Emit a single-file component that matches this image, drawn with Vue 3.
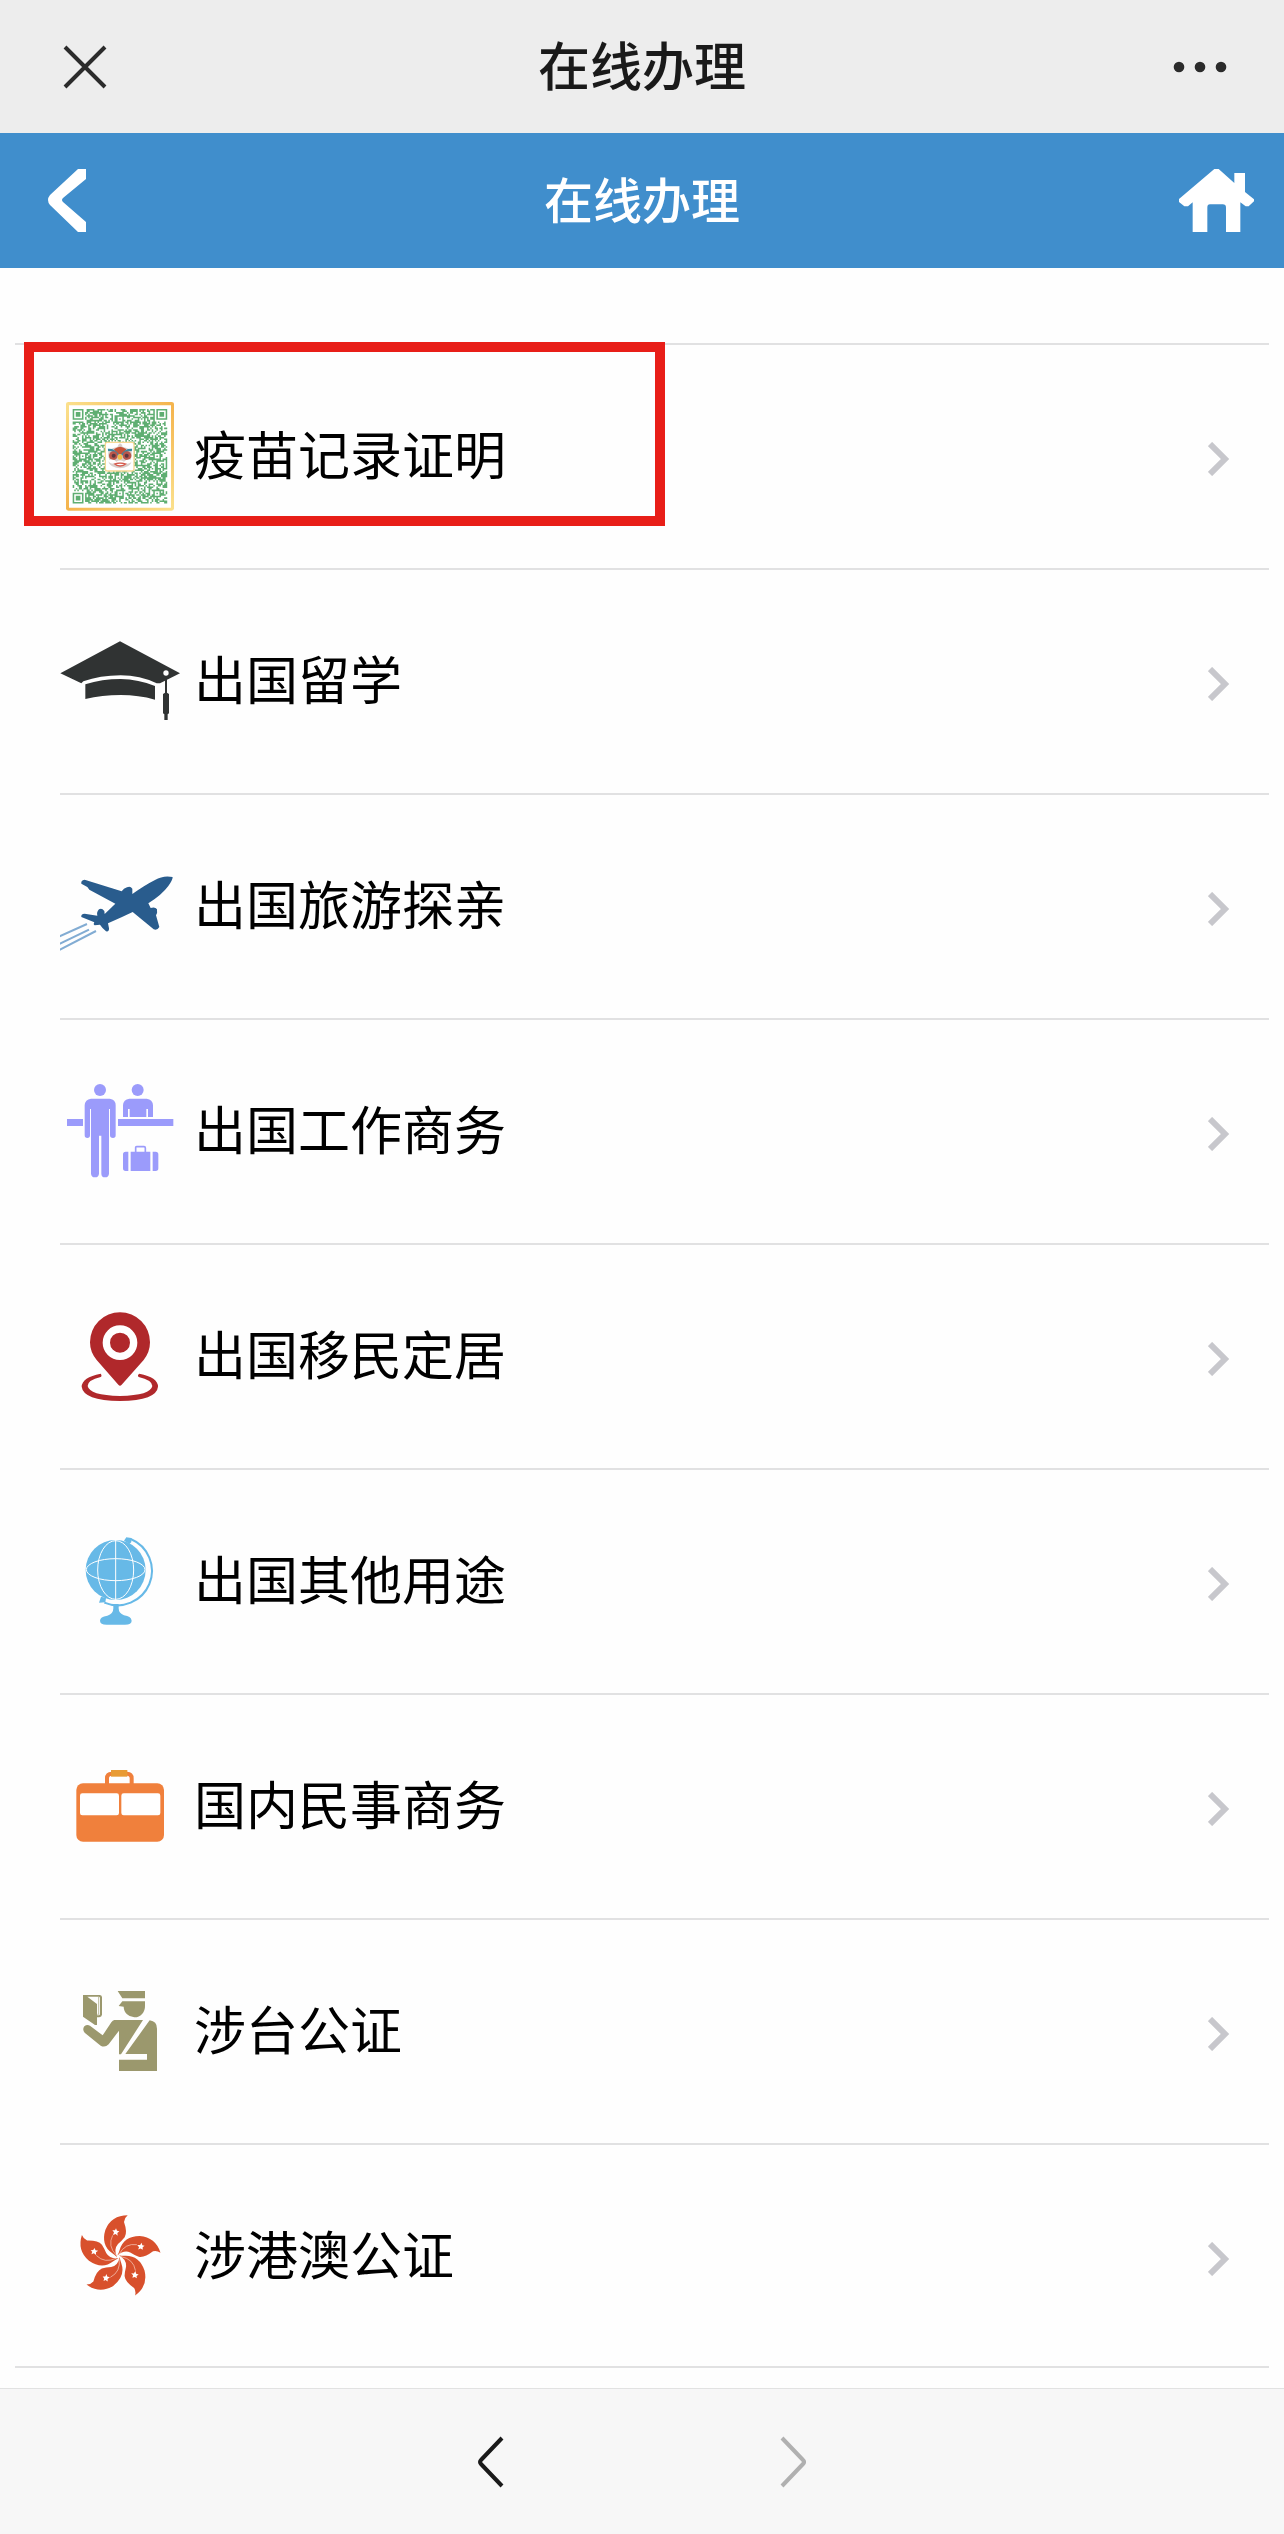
<script setup>
const services = [
  { id: 'vaccine', label: '疫苗记录证明', marked: true },
  { id: 'study', label: '出国留学' },
  { id: 'travel', label: '出国旅游探亲' },
  { id: 'work', label: '出国工作商务' },
  { id: 'settle', label: '出国移民定居' },
  { id: 'other', label: '出国其他用途' },
  { id: 'domestic', label: '国内民事商务' },
  { id: 'taiwan', label: '涉台公证' },
  { id: 'hkmo', label: '涉港澳公证' },
]

// Decorative code pattern: three finder squares and seeded filler modules.
const SIZE = 61
function buildCode() {
  let seed = 20211
  const rnd = () => {
    seed = (seed * 1103515245 + 12345) % 2147483648
    return seed / 2147483648
  }
  const finders = [[0, 0], [SIZE - 7, 0], [0, SIZE - 7]]
  const small = [[SIZE - 9, SIZE - 9], [28, 4], [4, 28], [52, 28], [28, 52]]
  const ring = (x, y, n) => {
    const edge = Math.max(Math.abs(x - n), Math.abs(y - n))
    return edge === n || edge <= n - 2
  }
  let d = ''
  for (let y = 0; y < SIZE; y++) {
    for (let x = 0; x < SIZE; x++) {
      let on = rnd() < 0.58
      for (const [fx, fy] of finders) {
        if (x >= fx - 1 && x <= fx + 7 && y >= fy - 1 && y <= fy + 7) {
          const inside = x >= fx && x < fx + 7 && y >= fy && y < fy + 7
          on = inside && ring(x - fx, y - fy, 3)
        }
      }
      for (const [sx, sy] of small) {
        if (x >= sx && x < sx + 5 && y >= sy && y < sy + 5) on = ring(x - sx, y - sy, 2)
      }
      if (on) d += `M${x} ${y}h1v1h-1z`
    }
  }
  return d
}
const codePath = buildCode()
const petals = [0, 72, 144, 216, 288]
</script>

<template>
  <div class="page">
    <header class="bar app-bar">
      <button type="button" class="icon-btn close" aria-label="关闭">
        <svg width="44" height="44" viewBox="0 0 44 44"><path d="M2 2L42 42M42 2L2 42" fill="none" stroke="#2b2b2b" stroke-width="4" /></svg>
      </button>
      <div class="app-title">在线办理</div>
      <button type="button" class="icon-btn more" aria-label="更多">
        <svg width="54" height="12" viewBox="0 0 54 12" fill="#2b2b2b"><circle cx="6" cy="6" r="5.3" /><circle cx="27" cy="6" r="5.3" /><circle cx="48" cy="6" r="5.3" /></svg>
      </button>
    </header>

    <nav class="bar page-bar">
      <a href="#" class="back" aria-label="返回">
        <svg width="38" height="63" viewBox="0 0 38 63"><path d="M30 0H38V10L15 29Q13 31 15 33L38 53V63H30L2 36Q-2 31 2 26Z" fill="#fff" /></svg>
      </a>
      <h1>在线办理</h1>
      <a href="#" class="home" aria-label="首页">
        <svg width="75" height="63" viewBox="57 87 225 189"><path d="M163 87H176L223 129V99H255V156L282 178V184L266 199H257L241 187V276H198V203Q198 193 188 193H150Q142 193 142 203V276H98V187L84 199H73L57 186V177Z" fill="#fff" /></svg>
      </a>
    </nav>

    <main>
      <ul class="services">
        <li v-for="item in services" :key="item.id">
          <a href="#" class="row">
            <svg class="pic" viewBox="0 0 360 360" aria-hidden="true">
              <g v-if="item.id === 'vaccine'" transform="translate(0 -3)">
                <defs>
                  <linearGradient id="gold" x1="0" y1="0" x2="1" y2="0"><stop offset="0" stop-color="#fbe08c" /><stop offset="1" stop-color="#f4b34c" /></linearGradient>
                  <linearGradient id="gold-side" x1="0" y1="0" x2="0" y2="1"><stop offset="0" stop-color="#fbe08c" /><stop offset="1" stop-color="#f4b34c" /></linearGradient>
                  <linearGradient id="gold-low" x1="0" y1="0" x2="1" y2="0"><stop offset="0" stop-color="#f4b34c" /><stop offset="1" stop-color="#fbe08c" /></linearGradient>
                  <linearGradient id="gold-right" x1="0" y1="0" x2="0" y2="1"><stop offset="0" stop-color="#f4b34c" /><stop offset="1" stop-color="#fbe08c" /></linearGradient>
                </defs>
                <rect x="18" y="21" width="324" height="326" rx="7" fill="#fff" />
                <path d="M18 28Q18 21 25 21H335Q342 21 342 28L333 31H27Z" fill="url(#gold)" />
                <path d="M18 340Q18 347 25 347H335Q342 347 342 340L333 338H27Z" fill="url(#gold-low)" />
                <rect x="18" y="26" width="9" height="316" fill="url(#gold-side)" />
                <rect x="333" y="26" width="9" height="316" fill="url(#gold-right)" />
                <path :d="codePath" transform="translate(38 42) scale(4.65)" fill="#5fae72" />
                <rect x="136" y="142" width="86" height="86" rx="6" fill="#fff" stroke="#f8d894" stroke-width="4" />
                <path d="M146 168Q158 157 172 157L175 149L180 145L186 149L188 157Q202 157 214 168Q218 182 212 192Q219 205 203 214Q180 226 157 214Q141 205 148 192Q142 182 146 168Z" fill="#d9cfcb" />
                <path d="M162 163Q180 148 199 163L190 178H170Z" fill="#c65339" />
                <path d="M144 165Q162 163 174 180M216 165Q198 163 186 180" fill="none" stroke="#3d87a0" stroke-width="7" />
                <circle cx="160" cy="182" r="13" fill="#b9564b" /><circle cx="201" cy="182" r="13" fill="#b9564b" />
                <circle cx="161" cy="182" r="6" fill="#5b3740" /><circle cx="200" cy="182" r="6" fill="#5b3740" />
                <ellipse cx="180" cy="186" rx="7" ry="8" fill="#efbd45" />
                <path d="M143 195Q162 191 169 200Q180 193 192 200Q200 191 218 195Q212 208 196 206Q180 199 165 206Q148 208 143 195Z" fill="#fff" />
                <path d="M160 206Q180 199 201 206Q180 224 160 206Z" fill="#d65b4d" />
                <path d="M168 208Q180 204 193 208Q180 214 168 208Z" fill="#fff" />
              </g>

              <g v-else-if="item.id === 'study'" transform="translate(-30 -3)" fill="#303333">
                <path d="M210 64L390 160L330 190H320Q270 166 212 166Q150 166 100 184L94 190L31 160Z" />
                <path d="M106 193Q156 177 212 177Q266 178 315 198V239Q266 225 212 225Q156 225 106 237Z" />
                <path d="M345 160H351V218L357 222V280L353 283V300H343V283L339 280V222L345 218Z" />
                <circle cx="348" cy="159" r="8" fill="#fff" />
              </g>

              <g v-else-if="item.id === 'travel'" transform="translate(-30 -678)">
                <path d="M368 771Q340 765 315 780Q285 795 247 822L247 806Q241 797 231 802Q221 805 215 814L104 779Q92 780 94 791L112 801L118 809L196 851L164 882L163 873Q155 862 147 868Q139 876 142 887L104 881Q92 882 94 891L133 907Q129 914 134 916L150 914Q158 926 168 934Q178 936 177 925L174 910Q215 892 248 876L311 928Q321 933 328 921L318 886Q323 880 321 868Q316 860 302 864L295 850Q335 825 355 798Q368 780 368 771Z" fill="#295c8d" />
                <path d="M28 949L111 912M28 972L117 929M28 990L138 933" fill="none" stroke="#82acd3" stroke-width="6" />
              </g>

              <g v-else-if="item.id === 'work'" transform="translate(-30 -33)" fill="#9b9bfb">
                <circle cx="150" cy="90" r="18" /><circle cx="263" cy="90" r="18" />
                <path d="M123 116H179Q197 118 197 136V226Q197 234 189 234Q180 234 180 226V147H177V341Q176 352 165 352Q154 352 154 341V227H147V341Q146 352 135 352Q124 352 123 341V147H120V226Q120 234 112 234Q104 234 104 226V136Q105 118 123 116Z" />
                <path d="M238 116H290Q308 118 309 136V171H294V147H289V171H239V147H234V171H219V136Q220 118 238 116Z" />
                <path d="M51 177H99V198H51ZM204 177H370V198H204ZM242 275H301V333H242ZM235 275V333H227Q219 333 219 325V283Q219 275 227 275ZM308 275H317Q325 275 325 283V325Q325 333 317 333H308Z" />
                <path d="M257 276V262Q257 260 260 260H282Q286 260 286 264V276" fill="none" stroke="#9b9bfb" stroke-width="5" />
              </g>

              <g v-else-if="item.id === 'settle'" transform="translate(-30 -708)">
                <path d="M210 757A90 90 0 0 1 300 847Q300 876 281 900L215 974Q210 980 205 974L140 900Q120 876 120 847A90 90 0 0 1 210 757Z" fill="#b0282b" />
                <circle cx="210" cy="848" r="41" fill="#b0282b" stroke="#fff" stroke-width="22" />
                <path d="M152 941Q157 948 152 951Q113 960 113 978Q118 1006 210 1008Q302 1006 307 978Q306 960 266 951Q261 945 268 941Q324 952 324 980Q320 1021 210 1023Q100 1021 95 980Q96 952 152 941Z" fill="#b0282b" />
              </g>

              <g v-else-if="item.id === 'other'" transform="translate(-30 -33)" fill="#67b9e7">
                <circle cx="197" cy="180" r="90" />
                <g fill="none" stroke="#fff" stroke-width="3"><path d="M197 90V270" /><ellipse cx="197" cy="180" rx="54" ry="88" /><ellipse cx="197" cy="179" rx="88" ry="33" /></g>
                <path d="M242 87A99 99 0 0 1 163 278" fill="none" stroke="#67b9e7" stroke-width="6" />
                <path d="M222 92L229 82L244 84V96L239 102ZM153 260L168 264L166 277L147 278Z" />
                <path d="M190 282V295Q190 312 172 317Q150 320 150 332Q150 344 170 344H225Q245 344 245 332Q243 319 222 316Q206 310 206 295V282Z" />
              </g>

              <g v-else-if="item.id === 'domestic'" transform="translate(-30 -708)">
                <path d="M171 822V805Q171 791 185 791H231Q245 791 245 805V822" fill="none" stroke="#f0803c" stroke-width="12" />
                <rect x="183" y="780" width="49" height="20" fill="#e89b34" />
                <rect x="79" y="820" width="263" height="175" rx="20" fill="#f0803c" />
                <rect x="90" y="850" width="117" height="66" rx="7" fill="#fff" />
                <rect x="214" y="850" width="117" height="66" rx="7" fill="#fff" />
              </g>

              <g v-else-if="item.id === 'taiwan'" transform="translate(-30 -33)" fill="#9b986d">
                <path d="M203 93H285V115H217ZM206 138L217 124H285V138A32 33 0 0 1 221 140Z" />
                <path d="M193 180H279L213 283H207V212L176 253Q165 264 152 257L104 218Q96 208 103 199Q111 192 120 197L158 226L184 187Q188 181 193 180Z" />
                <path d="M299 181Q321 184 321 206V333H207V299H291V282H226Z" />
                <path fill-rule="evenodd" d="M99 105H150Q156 106 156 112V164Q155 171 148 172H141V195H135L99 170ZM112 110L141 132V166H146Q150 166 150 161V114Q150 110 146 110Z" />
                <path d="M146 111V163H142" fill="none" stroke="#9b986d" stroke-width="2" />
              </g>

              <g v-else transform="translate(-30 -708)">
                <g v-for="angle in petals" :key="angle" :transform="`rotate(${angle} 205 890)`">
                  <path d="M233 766Q184 766 166 810Q152 856 187 880Q196 886 201 892Q190 868 204 852Q216 842 224 832Q233 817 222 786Q223 774 233 766Z" fill="#d8502c" />
                  <path d="M188 826Q172 858 199 886" fill="none" stroke="#f6c9b9" stroke-width="2" />
                  <path d="M198 805L201 812L208 814L202 819L203 827L197 822L189 825L192 817L187 811L195 811Z" fill="#fff" />
                </g>
              </g>
            </svg>
            <span class="label">{{ item.label }}</span>
            <svg class="go" width="22" height="34" viewBox="0 0 22 34" aria-hidden="true"><path d="M2 2L17 17L2 32" fill="none" stroke="#c7c7cc" stroke-width="6" /></svg>
          </a>
          <span v-if="item.marked" class="mark" aria-hidden="true"></span>
        </li>
      </ul>
    </main>

    <footer class="toolbar">
      <button type="button" class="icon-btn" aria-label="后退">
        <svg width="26" height="52" viewBox="0 0 26 52"><path d="M24 2L3 24Q1 26 3 28L24 50" fill="none" stroke="#1a1a1a" stroke-width="4" /></svg>
      </button>
      <button type="button" class="icon-btn" aria-label="前进" disabled>
        <svg width="26" height="52" viewBox="0 0 26 52"><path d="M2 2L23 24Q25 26 23 28L2 50" fill="none" stroke="#b0b0b0" stroke-width="4" /></svg>
      </button>
    </footer>
  </div>
</template>

<style>
body {
  margin: 0;
  background: #fefefe;
}
</style>

<style scoped>
.page {
  display: flex;
  flex-direction: column;
  min-height: 100vh;
  font-family: "Noto Sans CJK SC", "Noto Sans", sans-serif;
  color: #000;
}
svg {
  display: block;
  flex: none;
}
a {
  color: inherit;
  text-decoration: none;
}
.bar {
  display: grid;
  grid-template-columns: 1fr auto 1fr;
  align-items: center;
  box-sizing: border-box;
}
.icon-btn {
  padding: 0;
  border: 0;
  background: none;
}
.app-bar {
  height: 133px;
  padding: 0 57px 0 63px;
  background: #ededed;
}
.app-title {
  margin: 0 6px 6px 0;
  font-size: 52px;
  font-weight: 500;
  line-height: 72px;
  color: #1a1a1a;
}
.page-bar {
  height: 135px;
  padding: 0 30px 0 48px;
  background: #408ecc;
  color: #fff;
}
.page-bar h1 {
  margin: 0 18px 6px 0;
  font-size: 49px;
  font-weight: 500;
  line-height: 72px;
}
.more,
.home {
  justify-self: end;
}
.close,
.back {
  justify-self: start;
}
main {
  flex: 1;
  padding: 75px 15px 20px;
}
.services {
  margin: 0;
  padding: 0;
  list-style: none;
  border-top: 2px solid #e1e1e2;
  border-bottom: 2px solid #e1e1e2;
}
.services li {
  position: relative;
  margin-left: 45px;
}
.services li + li {
  border-top: 2px solid #e1e1e2;
}
.row {
  display: flex;
  align-items: center;
  gap: 14px;
  padding: 51px 39px 52px 0;
}
.services li:last-child .row {
  padding-bottom: 50px;
}
.pic {
  width: 120px;
  height: 120px;
}
.label {
  flex: 1;
  margin-bottom: 6px;
  font-size: 52px;
  line-height: 72px;
}
.go {
  margin-top: 6px;
}
.mark {
  position: absolute;
  top: -3px;
  left: -36px;
  box-sizing: border-box;
  width: 641px;
  height: 184px;
  border: 10px solid #e81e18;
  pointer-events: none;
}
.toolbar {
  display: flex;
  align-items: center;
  justify-content: center;
  gap: 276px;
  box-sizing: border-box;
  height: 146px;
  border-top: 1px solid #e2e2e2;
  background: #f7f7f7;
}
</style>
